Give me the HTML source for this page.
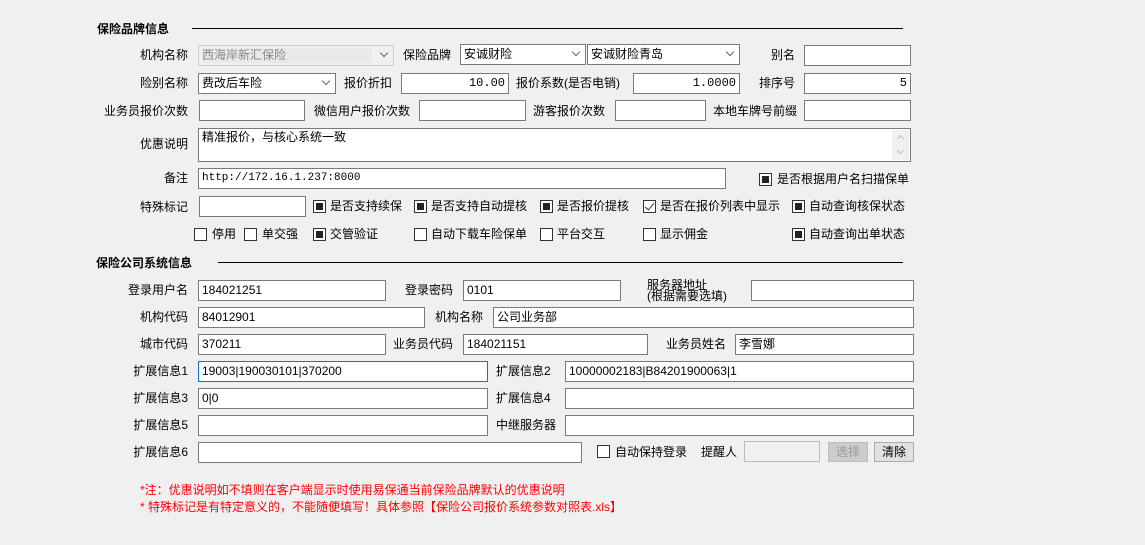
<!DOCTYPE html>
<html><head><meta charset="utf-8"><style>
*{box-sizing:border-box;margin:0;padding:0}
body{width:1145px;height:545px;background:#f0f0f0;position:relative;overflow:hidden;font-family:"Liberation Sans","Noto Sans CJK SC",sans-serif;font-size:12px;color:#000}
.a{position:absolute;white-space:nowrap;line-height:14px}
.l{position:absolute;white-space:nowrap;line-height:14px;text-align:right}
.i{position:absolute;background:#fff;border:1px solid #7a7a7a;height:21px;padding:2px 3px;line-height:15px;font-size:12px;white-space:nowrap;overflow:hidden}
.r{text-align:right;font-family:"Liberation Mono","Noto Sans CJK SC",monospace}
.s::after{content:"";position:absolute;right:6px;top:4px;width:5px;height:5px;border-right:1px solid #666;border-bottom:1px solid #666;transform:rotate(45deg)}
.cb{position:absolute;width:13px;height:13px;border:1px solid #333;background:#fff}
.cb.on::after{content:"";position:absolute;left:2px;top:2px;width:7px;height:7px;background:#222}
.cb.ck::after{content:"";position:absolute;left:3px;top:0px;width:4px;height:8px;border-right:1.5px solid #333;border-bottom:1.5px solid #333;transform:rotate(40deg)}
.t{font-weight:bold;position:absolute;line-height:14px}
.hr{position:absolute;height:1px;background:#000}
.red{position:absolute;color:#f00;white-space:nowrap;line-height:14px}
</style></head><body>
<div class="t" style="left:97px;top:22px">保险品牌信息</div>
<div class="hr" style="left:192px;top:28px;width:711px"></div>

<div class="l" style="left:100px;top:48px;width:88px">机构名称</div>
<div class="i s" style="left:198px;top:45px;width:196px;color:#888;border-color:#ccc;background:#f0f0f0"><span style="background:#e9e9e9;display:inline-block;width:170px">西海岸新汇保险</span></div>
<div class="a" style="left:403px;top:48px">保险品牌</div>
<div class="i s" style="left:460px;top:44px;width:126px">安诚财险</div>
<div class="i s" style="left:587px;top:44px;width:153px">安诚财险青岛</div>
<div class="a" style="left:771px;top:48px">别名</div>
<div class="i" style="left:804px;top:45px;width:107px"></div>

<div class="l" style="left:100px;top:76px;width:88px">险别名称</div>
<div class="i s" style="left:198px;top:73px;width:138px">费改后车险</div>
<div class="a" style="left:344px;top:76px">报价折扣</div>
<div class="i r" style="left:401px;top:73px;width:108px">10.00</div>
<div class="a" style="left:516px;top:76px">报价系数(是否电销)</div>
<div class="i r" style="left:633px;top:73px;width:107px">1.0000</div>
<div class="a" style="left:759px;top:76px">排序号</div>
<div class="i r" style="left:804px;top:73px;width:107px">5</div>

<div class="l" style="left:90px;top:104px;width:98px">业务员报价次数</div>
<div class="i" style="left:199px;top:100px;width:106px"></div>
<div class="a" style="left:314px;top:104px">微信用户报价次数</div>
<div class="i" style="left:419px;top:100px;width:107px"></div>
<div class="a" style="left:533px;top:104px">游客报价次数</div>
<div class="i" style="left:615px;top:100px;width:91px"></div>
<div class="a" style="left:713px;top:104px">本地车牌号前缀</div>
<div class="i" style="left:804px;top:100px;width:107px"></div>

<div class="l" style="left:100px;top:137px;width:88px">优惠说明</div>
<div class="i" style="left:198px;top:128px;width:713px;height:34px;padding-top:1px">精准报价，与核心系统一致
<div style="position:absolute;right:1px;top:1px;width:17px;height:30px;background:#f0f0f0"><div style="position:absolute;left:6px;top:6px;width:5px;height:5px;border-left:1px solid #bbb;border-top:1px solid #bbb;transform:rotate(45deg)"></div><div style="position:absolute;left:6px;top:18px;width:5px;height:5px;border-right:1px solid #bbb;border-bottom:1px solid #bbb;transform:rotate(45deg)"></div></div></div>

<div class="l" style="left:100px;top:171px;width:88px">备注</div>
<div class="i" style="left:198px;top:168px;width:528px;font-family:'Liberation Mono',monospace;font-size:11px">http://172.16.1.237:8000</div>
<div class="cb on" style="left:759px;top:173px"></div><div class="a" style="left:777px;top:172px">是否根据用户名扫描保单</div>

<div class="l" style="left:100px;top:200px;width:88px">特殊标记</div>
<div class="i" style="left:199px;top:196px;width:107px"></div>
<div class="cb on" style="left:313px;top:200px"></div><div class="a" style="left:330px;top:199px">是否支持续保</div>
<div class="cb on" style="left:414px;top:200px"></div><div class="a" style="left:431px;top:199px">是否支持自动提核</div>
<div class="cb on" style="left:540px;top:200px"></div><div class="a" style="left:557px;top:199px">是否报价提核</div>
<div class="cb ck" style="left:643px;top:200px"></div><div class="a" style="left:660px;top:199px">是否在报价列表中显示</div>
<div class="cb on" style="left:792px;top:200px"></div><div class="a" style="left:809px;top:199px">自动查询核保状态</div>

<div class="cb" style="left:194px;top:228px"></div><div class="a" style="left:212px;top:227px">停用</div>
<div class="cb" style="left:244px;top:228px"></div><div class="a" style="left:262px;top:227px">单交强</div>
<div class="cb on" style="left:313px;top:228px"></div><div class="a" style="left:330px;top:227px">交管验证</div>
<div class="cb" style="left:414px;top:228px"></div><div class="a" style="left:431px;top:227px">自动下载车险保单</div>
<div class="cb" style="left:540px;top:228px"></div><div class="a" style="left:557px;top:227px">平台交互</div>
<div class="cb" style="left:643px;top:228px"></div><div class="a" style="left:660px;top:227px">显示佣金</div>
<div class="cb on" style="left:792px;top:228px"></div><div class="a" style="left:809px;top:227px">自动查询出单状态</div>

<div class="t" style="left:96px;top:256px">保险公司系统信息</div>
<div class="hr" style="left:218px;top:262px;width:685px"></div>

<div class="l" style="left:100px;top:283px;width:88px">登录用户名</div>
<div class="i" style="left:198px;top:280px;width:188px">184021251</div>
<div class="a" style="left:405px;top:283px">登录密码</div>
<div class="i" style="left:463px;top:280px;width:158px">0101</div>
<div class="a" style="left:647px;top:280px;line-height:11px">服务器地址<br>(根据需要选填)</div>
<div class="i" style="left:751px;top:280px;width:163px"></div>

<div class="l" style="left:100px;top:310px;width:88px">机构代码</div>
<div class="i" style="left:198px;top:307px;width:227px">84012901</div>
<div class="a" style="left:435px;top:310px">机构名称</div>
<div class="i" style="left:493px;top:307px;width:421px">公司业务部</div>

<div class="l" style="left:100px;top:337px;width:88px">城市代码</div>
<div class="i" style="left:198px;top:334px;width:188px">370211</div>
<div class="a" style="left:393px;top:337px">业务员代码</div>
<div class="i" style="left:463px;top:334px;width:185px">184021151</div>
<div class="a" style="left:666px;top:337px">业务员姓名</div>
<div class="i" style="left:735px;top:334px;width:179px">李雪娜</div>

<div class="l" style="left:100px;top:364px;width:88px">扩展信息1</div>
<div class="i" style="left:198px;top:361px;width:290px;border-color:#0078d7">19003|190030101|370200</div>
<div class="a" style="left:496px;top:364px">扩展信息2</div>
<div class="i" style="left:565px;top:361px;width:349px">10000002183|B84201900063|1</div>

<div class="l" style="left:100px;top:391px;width:88px">扩展信息3</div>
<div class="i" style="left:198px;top:388px;width:290px">0|0</div>
<div class="a" style="left:496px;top:391px">扩展信息4</div>
<div class="i" style="left:565px;top:388px;width:349px"></div>

<div class="l" style="left:100px;top:418px;width:88px">扩展信息5</div>
<div class="i" style="left:198px;top:415px;width:290px"></div>
<div class="a" style="left:496px;top:418px">中继服务器</div>
<div class="i" style="left:565px;top:415px;width:349px"></div>

<div class="l" style="left:100px;top:445px;width:88px">扩展信息6</div>
<div class="i" style="left:198px;top:442px;width:384px"></div>
<div class="cb" style="left:597px;top:445px"></div><div class="a" style="left:615px;top:445px">自动保持登录</div>
<div class="a" style="left:701px;top:445px">提醒人</div>
<div class="i" style="left:744px;top:441px;width:76px;border-color:#bbb;background:#f0f0f0"></div>
<div class="i" style="left:828px;top:442px;width:40px;background:#ccc;border-color:#bbb;color:#999;text-align:center;padding:2px 0;height:20px">选择</div>
<div class="i" style="left:874px;top:442px;width:40px;background:#e1e1e1;border-color:#adadad;text-align:center;padding:2px 0;height:20px">清除</div>

<div class="red" style="left:140px;top:483px">*注：优惠说明如不填则在客户端显示时使用易保通当前保险品牌默认的优惠说明</div>
<div class="red" style="left:140px;top:500px">* 特殊标记是有特定意义的，不能随便填写！具体参照【保险公司报价系统参数对照表.xls】</div>
</body></html>
